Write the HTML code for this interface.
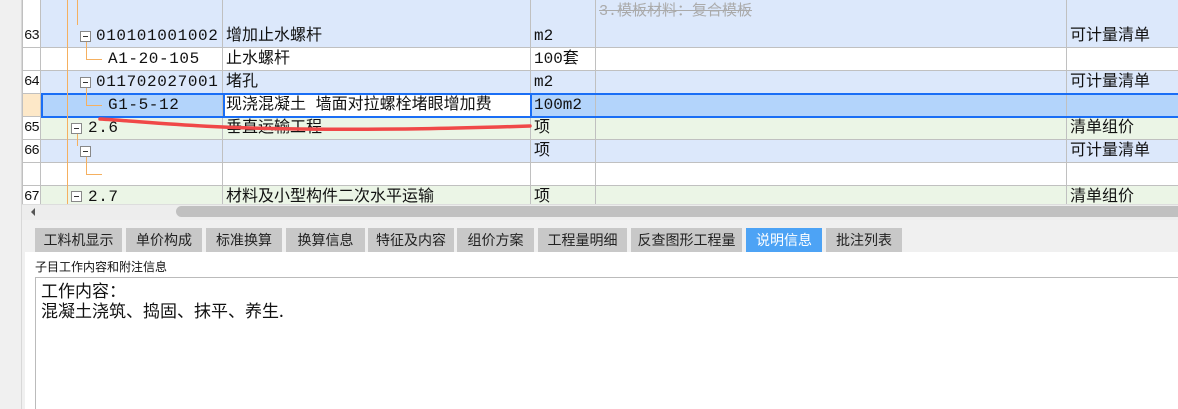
<!DOCTYPE html>
<html><head><meta charset="utf-8"><style>
*{margin:0;padding:0;box-sizing:border-box}
body{width:1178px;height:409px;overflow:hidden;background:#f0f0f0;font-family:"Liberation Mono","Noto Sans CJK SC",monospace;font-size:16px;color:#111;position:relative}
.a{position:absolute}
.row{position:absolute;left:22px;width:1156px;height:23px;border-bottom:1px solid #c0c0c0}
.c{position:absolute;top:0;height:22px;line-height:22px;border-right:1px solid #c0c0c0;white-space:nowrap;overflow:hidden}
.n{left:0;width:19px;background:#fff;padding-left:1px;border-left:1px solid #c0c0c0;font-size:14px;letter-spacing:-1px}
.t{left:19px;width:182px}
.d{left:201px;width:308px;padding-left:3px}
.u{left:509px;width:65px;padding-left:3px}
.e{left:574px;width:471px}
.k{left:1045px;width:111px;padding-left:3px;border-right:none}
.bx{position:absolute;width:11px;height:11px;border:1px solid #888;background:#fff}
.bx:after{content:"";position:absolute;left:2px;right:2px;top:4px;height:1px;background:#333}
.vl{position:absolute;width:1px;background:#f5b060}
.hl{position:absolute;height:1px;background:#f5b060}
.code{position:absolute;line-height:23px;letter-spacing:0.6px}
.tab{position:absolute;top:228px;height:24px;background:#c8c8c8;font-family:"Noto Sans CJK SC",sans-serif;font-size:14px;text-align:center;line-height:24px;color:#222}
</style></head><body>
<div class="a" style="left:0;top:0;width:22px;height:409px;background:#f0f0f0;border-right:1px solid #d8d8d8"></div>
<div class="a" style="left:22px;top:0;width:1156px;height:204px;background:#fff"></div>

<div class="row" style="top:0;height:26px;background:#dce8fb"><div class="c n" style="height:25px"></div><div class="c t" style="height:25px"></div><div class="c d" style="height:25px"></div><div class="c u" style="height:25px"></div><div class="c e" style="height:25px;color:#aaa;font-size:15px;line-height:20px;padding-left:3px;padding-top:2px"><span style="text-decoration:line-through">3.模板材料：复合模板</span></div><div class="c k" style="height:25px"></div></div>
<div class="row" style="top:25px;background:#dce8fb"><div class="c n">63</div><div class="c t"></div><div class="c d">增加止水螺杆</div><div class="c u">m2</div><div class="c e"></div><div class="c k">可计量清单</div></div>
<div class="row" style="top:48px;background:#fff"><div class="c n"></div><div class="c t"></div><div class="c d">止水螺杆</div><div class="c u">100套</div><div class="c e"></div><div class="c k"></div></div>
<div class="row" style="top:71px;background:#dce8fb"><div class="c n">64</div><div class="c t"></div><div class="c d">堵孔</div><div class="c u">m2</div><div class="c e"></div><div class="c k">可计量清单</div></div>
<div class="row" style="top:94px;background:#b3d4fb"><div class="c n" style="background:#fde8c8"></div><div class="c t"></div><div class="c d" style="background:#fff">现浇混凝土 墙面对拉螺栓堵眼增加费</div><div class="c u">100m2</div><div class="c e"></div><div class="c k"></div></div>
<div class="row" style="top:117px;background:#ebf5e6"><div class="c n">65</div><div class="c t"></div><div class="c d">垂直运输工程</div><div class="c u">项</div><div class="c e"></div><div class="c k">清单组价</div></div>
<div class="row" style="top:140px;background:#dce8fb"><div class="c n">66</div><div class="c t"></div><div class="c d"></div><div class="c u">项</div><div class="c e"></div><div class="c k">可计量清单</div></div>
<div class="row" style="top:163px;background:#fff"><div class="c n"></div><div class="c t"></div><div class="c d"></div><div class="c u"></div><div class="c e"></div><div class="c k"></div></div>
<div class="row" style="top:186px;height:18px;background:#ebf5e6;border:none"><div class="c n">67</div><div class="c t"></div><div class="c d">材料及小型构件二次水平运输</div><div class="c u">项</div><div class="c e"></div><div class="c k">清单组价</div></div>

<div class="a" style="left:41px;top:93px;width:1137px;height:25px;border:2px solid #1a6ef5;border-right:none"></div>
<div class="a" style="left:223px;top:94px;width:309px;height:23px;border-left:2px solid #1a6ef5;border-right:2px solid #1a6ef5"></div>

<div class="vl" style="left:67px;top:0;height:204px"></div>
<div class="vl" style="left:77px;top:0;height:25px"></div>
<div class="vl" style="left:86px;top:42px;height:18px"></div>
<div class="hl" style="left:86px;top:59px;width:16px"></div>
<div class="vl" style="left:86px;top:88px;height:18px"></div>
<div class="hl" style="left:86px;top:105px;width:16px"></div>
<div class="vl" style="left:77px;top:134px;height:12px"></div>
<div class="vl" style="left:86px;top:157px;height:18px"></div>
<div class="hl" style="left:86px;top:174px;width:16px"></div>
<div class="bx" style="left:80px;top:31px"></div><div class="code" style="left:96px;top:25px">010101001002</div>
<div class="code" style="left:108px;top:48px">A1-20-105</div>
<div class="bx" style="left:80px;top:77px"></div><div class="code" style="left:96px;top:71px">011702027001</div>
<div class="code" style="left:108px;top:94px">G1-5-12</div>
<div class="bx" style="left:71px;top:123px"></div><div class="code" style="left:88px;top:117px">2.6</div>
<div class="bx" style="left:80px;top:146px"></div>
<div class="bx" style="left:71px;top:191px"></div><div class="code" style="left:88px;top:186px">2.7</div>

<svg class="a" style="left:0;top:0" width="1178" height="210"><path d="M100 119 C150 122,200 128,300 129 C400 130,470 128,530 126" stroke="#f04848" stroke-width="3.5" fill="none" stroke-linecap="round"/></svg>

<div class="a" style="left:22px;top:204px;width:1156px;height:16px;background:#ededed;border-top:1px solid #ddd"></div>
<div class="a" style="left:31px;top:208px;width:0;height:0;border-top:4px solid transparent;border-bottom:4px solid transparent;border-right:4px solid #555"></div>
<div class="a" style="left:176px;top:206px;width:1002px;height:11px;background:#c0c0c0;border-radius:6px 0 0 6px"></div>

<div class="tab" style="left:35px;width:87px">工料机显示</div>
<div class="tab" style="left:126px;width:76px">单价构成</div>
<div class="tab" style="left:206px;width:76px">标准换算</div>
<div class="tab" style="left:286px;width:79px">换算信息</div>
<div class="tab" style="left:368px;width:86px">特征及内容</div>
<div class="tab" style="left:457px;width:77px">组价方案</div>
<div class="tab" style="left:538px;width:89px">工程量明细</div>
<div class="tab" style="left:631px;width:111px">反查图形工程量</div>
<div class="tab" style="left:746px;width:76px;background:#4da3f5;color:#fff">说明信息</div>
<div class="tab" style="left:826px;width:76px">批注列表</div>

<div class="a" style="left:25px;top:252px;width:1153px;height:157px;background:#fff"></div>
<div class="a" style="left:35px;top:258px;font-family:'Noto Sans CJK SC',sans-serif;font-size:12px">子目工作内容和附注信息</div>
<div class="a" style="left:35px;top:277px;width:1143px;height:132px;border:1px solid #bbb;border-right:none;border-bottom:none;padding:2px 0 0 5px;line-height:20px;font-size:17px;font-family:'Noto Sans CJK SC',sans-serif">工作内容：<br>混凝土浇筑、捣固、抹平、养生.</div>
</body></html>
